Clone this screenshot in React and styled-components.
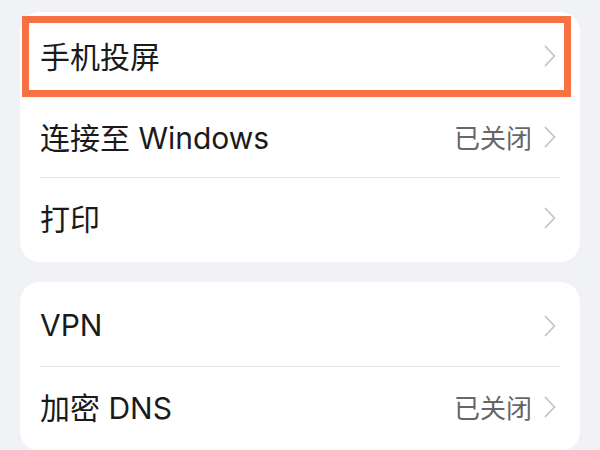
import React from "react";
import styled, { createGlobalStyle } from "styled-components";

const GlobalStyle = createGlobalStyle`
  html, body {
    margin: 0;
    padding: 0;
    background: #f1f2f6;
    font-family: "Inter", "Noto Sans CJK SC", sans-serif;
  }
`;

const groups = [
  [
    { label: "手机投屏", highlight: true },
    { label: "连接至 Windows", value: "已关闭" },
    { label: "打印" },
  ],
  [
    { label: "VPN" },
    { label: "加密 DNS", value: "已关闭" },
  ],
];

function Chevron() {
  return (
    <svg width="12" height="22" viewBox="0 0 12 22">
      <polyline
        points="1.5,1.5 10.5,11 1.5,20.5"
        fill="none"
        stroke="#c4c4c6"
        strokeWidth="1.8"
        strokeLinecap="round"
        strokeLinejoin="round"
      />
    </svg>
  );
}

export default function App() {
  return (
    <Page>
      <GlobalStyle />
      {groups.map((group, gi) => (
        <Card key={gi}>
          {group.map((item, i) => (
            <React.Fragment key={item.label}>
              {i > 0 && <Divider />}
              <Row>
                <Label>{item.label}</Label>
                <Right>
                  {item.value && <Value>{item.value}</Value>}
                  <Chevron />
                </Right>
                {item.highlight && <Highlight />}
              </Row>
            </React.Fragment>
          ))}
        </Card>
      ))}
    </Page>
  );
}

const Page = styled.div`
  display: flex;
  flex-direction: column;
  gap: 20px;
  padding: 12px 20px 0;
  height: 450px;
  box-sizing: border-box;
  overflow: hidden;
`;

const Card = styled.div`
  background: #fff;
  border-radius: 20px;
  padding: 4px 0;
  flex-shrink: 0;
`;

const Row = styled.div`
  position: relative;
  height: 80px;
  display: flex;
  align-items: center;
  justify-content: space-between;
  padding: 0 24px 0 20px;
`;

const Label = styled.span`
  font-size: 30px;
  color: #1a1a1a;
  margin-top: -2px;
`;

const Right = styled.div`
  display: flex;
  align-items: center;
  gap: 12px;
`;

const Value = styled.span`
  font-size: 26px;
  color: #666;
  margin-top: -2px;
`;

const Divider = styled.div`
  height: 1px;
  background: #e4e4e6;
  margin: 0 20px;
`;

const Highlight = styled.div`
  position: absolute;
  top: 0;
  bottom: -1px;
  left: 2px;
  right: 9px;
  border: 7px solid #f87142;
  pointer-events: none;
`;
